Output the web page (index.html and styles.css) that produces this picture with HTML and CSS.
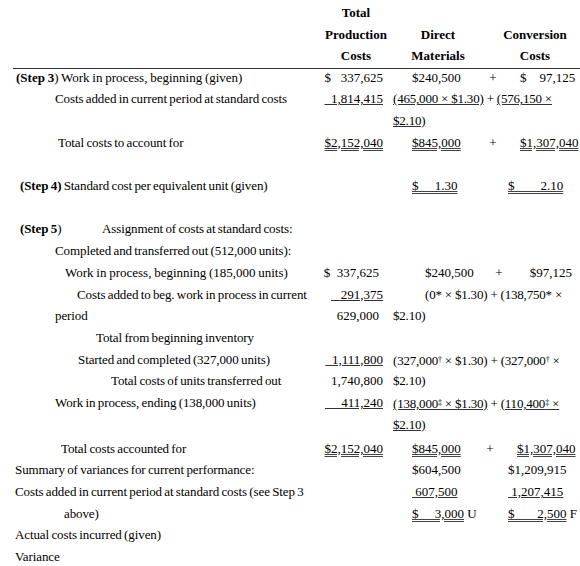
FILE: index.html
```html
<!DOCTYPE html>
<html>
<head>
<meta charset="utf-8">
<link rel="stylesheet" href="styles.css">
</head>
<body>
<div class="sheet">
  <div class="head">
    <div></div>
    <div>Total<br>Production<br>Costs</div>
    <div>Direct<br>Materials</div>
    <div class="hcc">Conversion<br>Costs</div>
  </div>

  <div class="row">
    <div class="label loose i16"><b>(Step 3</b>) Work in process, beginning (given)</div>
    <div class="tot">$   337,625</div>
    <div class="dm">$240,500</div>
    <div class="plus">+</div>
    <div class="cc">$    97,125</div>
  </div>
  <div class="row">
    <div class="label i55">Costs added in current period at standard costs</div>
    <div class="tot"><span class="u">  1,814,415</span></div>
    <div class="expr"><span class="u">(465,000 × $1.30)</span> + <span class="u">(576,150 ×</span></div>
  </div>
  <div class="row">
    <div class="label"></div>
    <div class="expr"><span class="u">$2.10)</span></div>
  </div>
  <div class="row">
    <div class="label i58">Total costs to account for</div>
    <div class="tot"><span class="uu">$2,152,040</span></div>
    <div class="dm"><span class="uu">$845,000</span></div>
    <div class="plus">+</div>
    <div class="cc"><span class="uu">$1,307,040</span></div>
  </div>
  <div class="row"></div>
  <div class="row">
    <div class="label i20"><b>(Step 4)</b> Standard cost per equivalent unit (given)</div>
    <div class="dm"><span class="uu">$     1.30</span></div>
    <div class="cc cc-sum"><span class="uu">$        2.10</span></div>
  </div>
  <div class="row"></div>
  <div class="row">
    <div class="label i20"><span class="step5"><b>(Step 5</b>)</span>Assignment of costs at standard costs:</div>
  </div>
  <div class="row">
    <div class="label i55">Completed and transferred out (512,000 units):</div>
  </div>
  <div class="row">
    <div class="label loose i65">Work in process, beginning (185,000 units)</div>
    <div class="tot tot-in">$  337,625</div>
    <div class="dm dm-s5">$240,500</div>
    <div class="plus plus-s5">+</div>
    <div class="cc cc-s5">$97,125</div>
  </div>
  <div class="row">
    <div class="label i77">Costs added to beg. work in process in current</div>
    <div class="tot"><span class="u">   291,375</span></div>
    <div class="expr expr-s5">(0* × $1.30) + (138,750* ×</div>
  </div>
  <div class="row">
    <div class="label i55">period</div>
    <div class="tot tot-in">629,000</div>
    <div class="expr">$2.10)</div>
  </div>
  <div class="row">
    <div class="label i96">Total from beginning inventory</div>
  </div>
  <div class="row">
    <div class="label i78">Started and completed (327,000 units)</div>
    <div class="tot"><span class="u">  1,111,800</span></div>
    <div class="expr">(327,000<span class="mk">†</span> × $1.30) + (327,000<span class="mk">†</span> ×</div>
  </div>
  <div class="row">
    <div class="label i111">Total costs of units transferred out</div>
    <div class="tot">1,740,800</div>
    <div class="expr">$2.10)</div>
  </div>
  <div class="row">
    <div class="label i55">Work in process, ending (138,000 units)</div>
    <div class="tot"><span class="u">     411,240</span></div>
    <div class="expr"><span class="u">(138,000<span class="mk">‡</span> × $1.30)</span> + <span class="u">(110,400<span class="mk">‡</span> ×</span></div>
  </div>
  <div class="row">
    <div class="label"></div>
    <div class="expr"><span class="u">$2.10)</span></div>
  </div>
  <div class="row row-gap">
    <div class="label i61">Total costs accounted for</div>
    <div class="tot"><span class="uu">$2,152,040</span></div>
    <div class="dm"><span class="uu">$845,000</span></div>
    <div class="plus plus-b">+</div>
    <div class="cc cc-tot"><span class="uu">$1,307,040</span></div>
  </div>
  <div class="row">
    <div class="label i15">Summary of variances for current performance:</div>
    <div class="dm">$604,500</div>
    <div class="cc cc-sum">$1,209,915</div>
  </div>
  <div class="row">
    <div class="label i15">Costs added in current period at standard costs (see Step 3</div>
    <div class="dm"><span class="u"> 607,500</span></div>
    <div class="cc cc-sum"><span class="u"> 1,207,415</span></div>
  </div>
  <div class="row">
    <div class="label i64">above)</div>
    <div class="dm"><span class="uu">$     3,000</span> U</div>
    <div class="cc cc-sum"><span class="uu">$       2,500</span> F</div>
  </div>
  <div class="row">
    <div class="label i15">Actual costs incurred (given)</div>
  </div>
  <div class="row">
    <div class="label i15">Variance</div>
  </div>
</div>
</body>
</html>
```

FILE: styles.css
```css
* { box-sizing: border-box; }

body {
  margin: 0;
  width: 580px;
  background: #fff;
  color: #000;
  font-family: "Liberation Serif", "Times New Roman", serif;
  font-size: 13px;
}

.sheet {
  padding-top: 2.25px;
}

.head {
  display: grid;
  grid-template-columns: 305px 76px 88px 1fr;
  align-items: end;
  margin-left: 13px;
  padding-bottom: 1.5px;
  border-bottom: 1px solid #333;
  line-height: 21.3px;
  font-weight: bold;
  text-align: center;
}

.head .hcc {
  padding-left: 8px;
}

.row {
  display: grid;
  grid-template-columns: 318px 68px 98px 24px 72px;
  height: 21.7px;
  line-height: 18px;
}

.row-gap {
  margin-top: 2.3px;
}

.label,
.tot,
.dm,
.plus,
.cc,
.expr {
  white-space: pre;
}

.label {
  grid-column: 1;
  letter-spacing: -0.1px;
  word-spacing: -0.8px;
}

.label.loose {
  letter-spacing: 0;
  word-spacing: -0.5px;
}

.tot {
  grid-column: 2;
  text-align: right;
  padding-right: 3px;
}

.tot-in { padding-right: 7px; }

.dm {
  grid-column: 3;
  padding-left: 26px;
}

.dm-s5 { padding-left: 39px; }

.plus {
  grid-column: 4;
  text-align: center;
  padding-right: 6px;
}

.plus-s5 { padding-right: 0; padding-left: 6px; }
.plus-b { padding-right: 12px; }

.cc {
  grid-column: 5;
  padding-left: 12px;
}

.cc-sum { padding-left: 0; }
.cc-tot { padding-left: 9px; }
.cc-s5 {
  padding-left: 0;
  text-align: right;
  padding-right: 8px;
}

.expr {
  grid-column: 3 / 6;
  padding-left: 7px;
  letter-spacing: -0.2px;
}

.expr-s5 { padding-left: 39px; }

.u {
  text-decoration: underline;
  text-decoration-color: #333;
}

.uu {
  text-decoration: underline double;
  text-decoration-color: #444;
}

.mk {
  font-size: 8px;
  vertical-align: 3px;
}

.step5 {
  display: inline-block;
  width: 82px;
}

.i15 { padding-left: 15px; }
.i16 { padding-left: 16px; }
.i20 { padding-left: 20px; }
.i55 { padding-left: 55px; }
.i58 { padding-left: 58px; }
.i61 { padding-left: 61px; }
.i64 { padding-left: 64px; }
.i65 { padding-left: 65px; }
.i77 { padding-left: 77px; }
.i78 { padding-left: 78px; }
.i96 { padding-left: 96px; }
.i111 { padding-left: 111px; }
```
